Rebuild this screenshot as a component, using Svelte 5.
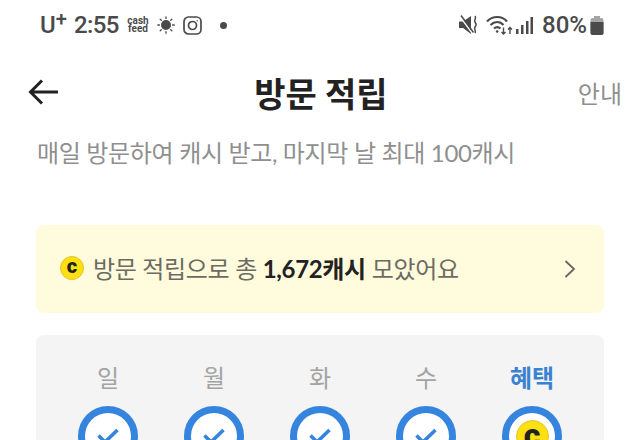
<script>
  const days = [
    { label: '일', done: true },
    { label: '월', done: true },
    { label: '화', done: true },
    { label: '수', done: true },
    { label: '혜택', done: false }
  ];
</script>

<div class="screen">
  <div class="status">
    <div class="status-left">
      <span class="carrier">U<sup>+</sup></span>
      <span class="time">2:55</span>
      <span class="cash">cash<br />feed</span>
      <svg width="18" height="18" viewBox="0 0 18 18" class="sun">
        <circle cx="9" cy="9" r="5" fill="#4a4a4a" />
        <g stroke="#4a4a4a" stroke-width="1.3" stroke-linecap="round">
          <path d="M9 .8v1.6M9 15.6v1.6M.8 9h1.6M15.6 9h1.6M3.2 3.2l1.1 1.1M13.7 13.7l1.1 1.1M3.2 14.8l1.1-1.1M13.7 4.3l1.1-1.1" />
        </g>
      </svg>
      <svg width="19" height="19" viewBox="0 0 19 19" class="insta" fill="none" stroke="#4a4a4a" stroke-width="1.7">
        <rect x="1" y="1" width="17" height="17" rx="4.5" />
        <circle cx="9.5" cy="9.5" r="4" />
        <circle cx="14.2" cy="4.8" r="0.7" fill="#4a4a4a" stroke="none" />
      </svg>
      <span class="dot"></span>
    </div>
    <div class="status-right">
      <svg width="19" height="20" viewBox="0 0 19 20" class="mute">
        <path d="M0 6.500h4L12 1v18l-8-6H0z" fill="#4a4a4a" />
        <path d="M1 1.500 13.500 18.500" stroke="#fff" stroke-width="1.500" />
        <path d="M2 .5 14.500 17.500" stroke="#4a4a4a" stroke-width="1.500" />
        <path d="M16 1c2 2.500-1.500 3.500 0 6s1.500 2.500 0 5 1.500 3.500 0 6" stroke="#4a4a4a" stroke-width="1.500" fill="none" />
      </svg>
      <svg width="28" height="20" viewBox="0 0 28 20" class="wifi" fill="none" stroke="#4a4a4a" stroke-width="2.200">
        <path d="M1 6.500C6.500 .5 16 .5 21 6.500" />
        <path d="M4.500 10c4-4 9.500-4 13 0" />
        <path d="M8 13.500c2-1.800 4.500-1.800 6.500 0" />
        <circle cx="11.200" cy="16.500" r="1.300" fill="#4a4a4a" stroke="none" />
        <path d="M17.500 12.500v6.500M15.500 17l2 2 2-2M24 19v-6.500M22 14.500l2-2 2 2" stroke-width="1.400" />
      </svg>
      <svg width="17" height="17" viewBox="0 0 17 17" class="signal" fill="#4a4a4a">
        <rect x="0" y="12" width="2.500" height="5" />
        <rect x="5" y="8" width="2.500" height="9" />
        <rect x="10" y="4" width="2.500" height="13" />
        <rect x="14.500" y="0" width="2.500" height="17" />
      </svg>
      <span class="pct">80%</span>
      <svg width="14" height="19" viewBox="0 0 14 19" class="battery">
        <rect x="4" y="0" width="6" height="3" fill="#a5a5a5" />
        <rect x="0.500" y="2" width="13" height="17" rx="2" fill="#a5a5a5" />
        <path d="M0.500 6h13v11a2 2 0 0 1-2 2h-9a2 2 0 0 1-2-2z" fill="#4a4a4a" />
      </svg>
    </div>
  </div>

  <header>
    <svg width="30" height="26" viewBox="0 0 30 26" fill="none" stroke="#222" stroke-width="3" class="back">
      <path d="M14 1.500 2.500 13 14 24.500M2.500 13H30" />
    </svg>
    <h1>방문 적립</h1>
    <span class="guide">안내</span>
  </header>

  <p class="sub">매일 방문하여 캐시 받고, 마지막 날 최대 100캐시</p>

  <div class="banner">
    <span class="coin small">c</span>
    <span class="banner-text">방문 적립으로 총 <b>1,672캐시</b> 모았어요</span>
    <svg width="12" height="20" viewBox="0 0 12 20" fill="none" stroke="#666" stroke-width="1.800" class="chev">
      <path d="M1.500 2 10 10l-8.500 8" />
    </svg>
  </div>

  <div class="panel">
    {#each days as day}
      <div class="day">
        <span class="label" class:active={!day.done}>{day.label}</span>
        <div class="ring">
          {#if day.done}
            <svg width="24" height="18" viewBox="0 0 24 18" fill="none" stroke="#3584de" stroke-width="3.600" class="check">
              <path d="M2.500 8.500 9 15 21.500 3" />
            </svg>
          {:else}
            <span class="coin big">c</span>
          {/if}
        </div>
      </div>
    {/each}
  </div>
</div>

<style>
  :global(body) {
    margin: 0;
    background: #fff;
  }

  .screen {
    width: 640px;
    height: 440px;
    overflow: hidden;
    font-family: Lato, "Noto Sans CJK KR", sans-serif;
    background: #fff;
  }

  .status {
    display: flex;
    justify-content: space-between;
    align-items: center;
    height: 50px;
    padding: 0 36px 0 40px;
    box-sizing: border-box;
    color: #4a4a4a;
    font-family: Roboto, sans-serif;
  }

  .status-left,
  .status-right {
    display: flex;
    align-items: center;
  }

  .carrier {
    font-size: 24px;
    font-weight: 500;
    width: 34px;
  }

  .carrier sup {
    font-size: 20px;
    line-height: 0;
    vertical-align: 7px;
  }

  .time {
    font-size: 24px;
    font-weight: 500;
    letter-spacing: -0.6px;
    width: 53px;
  }

  .cash {
    font-size: 10px;
    font-weight: 700;
    line-height: 8px;
    width: 22px;
    text-align: center;
  }

  .sun {
    margin-left: 8px;
  }

  .insta {
    margin-left: 8px;
  }

  .dot {
    width: 7px;
    height: 7px;
    border-radius: 50%;
    background: #4a4a4a;
    margin-left: 18px;
  }

  .wifi {
    margin-left: 8px;
  }

  .signal {
    margin-left: 2px;
  }

  .pct {
    font-size: 24px;
    font-weight: 500;
    margin-left: 9px;
  }

  .battery {
    margin-left: 3px;
  }

  header {
    display: flex;
    align-items: center;
    justify-content: space-between;
    height: 84px;
    padding: 0 18px 0 28px;
  }

  h1 {
    margin: 0 0 0 6px;
    font-size: 34px;
    font-weight: 700;
    color: #222;
  }

  .guide {
    font-size: 24px;
    color: #8f8f8f;
  }

  .sub {
    margin: 0;
    padding: 0 37px;
    height: 40px;
    line-height: 38px;
    font-size: 24px;
    letter-spacing: -0.33px;
    color: #8f8f8f;
  }

  .banner {
    display: flex;
    align-items: center;
    margin: 51px 36px 0;
    height: 88px;
    padding: 0 28px 0 24px;
    background: #fffbdc;
    border-radius: 8px;
  }

  .banner-text {
    flex: 1;
    margin-left: 9px;
    font-size: 24px;
    letter-spacing: -0.33px;
    color: #6b6b63;
    margin-top: -3px;
  }

  .banner-text b {
    color: #222;
    font-weight: 700;
  }

  .coin {
    display: flex;
    align-items: center;
    justify-content: center;
    box-sizing: border-box;
    border-radius: 50%;
    background: #fde012;
    border: 1px solid #e2c42c;
    color: #222;
    font-family: Roboto, sans-serif;
    font-weight: 900;
  }

  .coin.small {
    width: 24px;
    height: 24px;
    font-size: 20px;
    line-height: 1;
    padding-bottom: 3px;
    margin-top: -3px;
  }

  .coin.big {
    width: 33px;
    height: 33px;
    font-size: 32px;
    padding-bottom: 2px;
  }

  .panel {
    display: grid;
    grid-template-columns: repeat(5, 1fr);
    margin: 22px 36px 0;
    padding: 25px 19px 20px;
    background: #f4f4f4;
    border-radius: 8px 8px 0 0;
  }

  .day {
    display: flex;
    flex-direction: column;
    align-items: center;
  }

  .label {
    font-size: 24px;
    line-height: 36px;
    color: #a3a3a3;
  }

  .label.active {
    color: #3b82d0;
    font-weight: 700;
  }

  .ring {
    display: flex;
    align-items: center;
    justify-content: center;
    box-sizing: border-box;
    width: 60px;
    height: 60px;
    margin-top: 10px;
    border: 7px solid #3584de;
    border-radius: 50%;
    background: #fff;
  }
</style>
